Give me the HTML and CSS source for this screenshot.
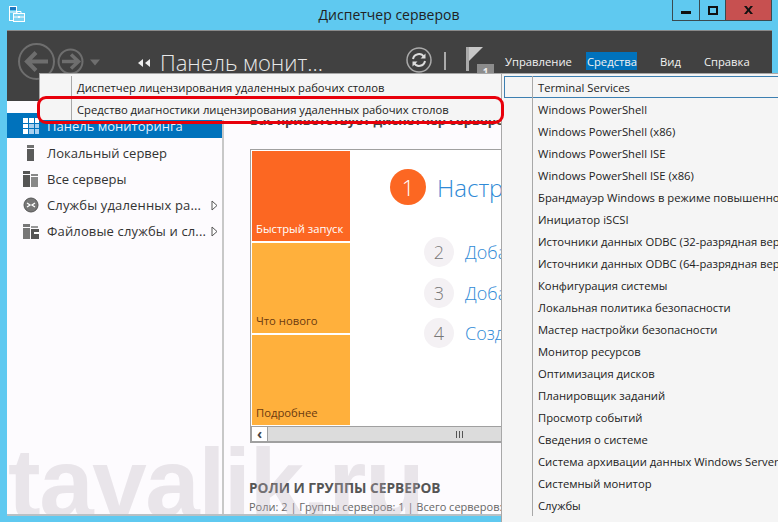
FILE: index.html
```html
<!DOCTYPE html>
<html lang="ru">
<head>
<meta charset="utf-8">
<title>Диспетчер серверов</title>
<link rel="stylesheet" href="styles.css">
</head>
<body>
<div class="window">
  <div class="titlebar">
    <svg class="app-icon" width="17" height="17" viewBox="0 0 17 17" fill="none"><rect x="0.500" y="0.500" width="7" height="14" stroke="#fff"/><rect x="1" y="1" width="6" height="3" fill="#1c78c0"/><path d="M1 6h6" stroke="#fff"/><rect x="4.500" y="7.500" width="11" height="8" fill="#7fd3f2" stroke="#fff"/><path d="M8 7.500V5.500h4v2M5 11h10" stroke="#fff"/><rect x="9" y="10" width="2" height="2" fill="#fff"/></svg>
    <div class="title">Диспетчер серверов</div>
    <div class="controls">
      <div class="ctl ctl-min"><span class="min-glyph"></span></div>
      <div class="ctl ctl-max"><span class="max-glyph"></span></div>
      <div class="ctl ctl-close"><svg width="9" height="8" viewBox="0 0 9 8"><path d="M0 0h2.500L4.500 2.500 6.500 0H9L5.800 4 9 8H6.500L4.500 5.500 2.500 8H0l3.200-4z" fill="#111"/></svg></div>
    </div>
  </div>
  <div class="client">
    <div class="toolbar">
      <svg class="nav" width="84" height="40" viewBox="0 0 84 40" fill="none" stroke="#6e6e6e">
        <circle cx="19.500" cy="19.500" r="17.500" stroke-width="2"/>
        <path d="M31 19.500H10M19 10.500l-9 9 9 9" stroke-width="4"/>
        <circle cx="53.500" cy="19.500" r="12" stroke-width="2"/>
        <path d="M45 19.500h17M54 12.500l7.500 7-7.500 7" stroke-width="3.500"/>
        <path d="M73 17.500h10l-5 6z" fill="#6e6e6e" stroke="none"/>
      </svg>
      <svg class="crumb-arrows" width="12" height="8" viewBox="0 0 12 8"><path d="M5 0v8L0 4zM12 0v8L7 4z" fill="#eee"/></svg>
      <span class="crumb">Панель монит...</span>
      <svg class="refresh" width="28" height="28" viewBox="0 0 28 28" fill="none"><circle cx="14" cy="14" r="12" stroke="#aaa" stroke-width="1.500"/><path d="M8 13a6 6 0 0 1 11-2M20 15a6 6 0 0 1-11 2" stroke="#ddd" stroke-width="2"/><path d="M20.500 7.500v5h-5zM7.500 20.500v-5h5z" fill="#ddd"/></svg>
      <span class="sep"></span>
      <div class="flag">
        <svg class="flag-svg" width="18" height="24" viewBox="0 0 18 24"><rect x="0" y="0" width="3" height="24" fill="#aaa"/><path d="M3 0h14L3 14z" fill="#c8c8c8"/></svg>
        <span class="badge">1</span>
      </div>
      <nav class="menubar">
        <span class="mi">Управление</span>
        <span class="mi mi-active">Средства</span>
        <span class="mi">Вид</span>
        <span class="mi">Справка</span>
      </nav>
    </div>
    <div class="strip"></div>
    <div class="content">
      <aside class="sidebar">
        <div class="side-item side-active">
          <svg class="si" width="16" height="16" viewBox="0 0 16 16"><path d="M0 0h5v5H0zM6 0h5v5H6zM12 0h4v5h-4z" fill="#fff"/><path d="M0 6h5v4H0zM0 11h5v5H0z" fill="#fff"/><path d="M6 6h5v4H6zM12 6h4v4h-4zM6 11h5v5H6zM12 11h4v5h-4z" fill="#a8cfee"/></svg>
          <span>Панель мониторинга</span>
        </div>
        <div class="side-item">
          <svg class="si" width="16" height="16" viewBox="0 0 16 16"><rect x="4" y="0" width="7" height="3" fill="#707070"/><rect x="4" y="4" width="7" height="12" fill="#5a5a5a"/></svg>
          <span>Локальный сервер</span>
        </div>
        <div class="side-item">
          <svg class="si" width="16" height="16" viewBox="0 0 16 16"><rect x="0" y="0" width="7" height="3" fill="#555"/><rect x="0" y="4" width="7" height="12" fill="#555"/><rect x="8" y="3" width="7" height="2" fill="#888"/><rect x="8" y="6" width="7" height="10" fill="#888"/></svg>
          <span>Все серверы</span>
        </div>
        <div class="side-item">
          <svg class="si" width="16" height="16" viewBox="0 0 16 16" fill="none"><circle cx="8" cy="8" r="7" fill="#777" stroke="#555"/><path d="M4 6l3 2-3 2M12 6L9 8l3 2" stroke="#fff" stroke-width="1.300"/></svg>
          <span class="side-label">Службы удаленных ра...</span>
          <svg class="tri" width="7" height="11" viewBox="0 0 7 11"><path d="M1 1v9l5-4.500z" fill="#fff" stroke="#555"/></svg>
        </div>
        <div class="side-item">
          <svg class="si" width="16" height="16" viewBox="0 0 16 16"><path d="M0 1h7v3H0zM0 5h7v11H0z" fill="#777"/><path d="M8 3h7v2H8z" fill="#999"/><path d="M8 6h8v10H8z" fill="#555"/><path d="M11 9h5v2h-5z" fill="#fff"/></svg>
          <span class="side-label">Файловые службы и сл...</span>
          <svg class="tri" width="7" height="11" viewBox="0 0 7 11"><path d="M1 1v9l5-4.500z" fill="#fff" stroke="#555"/></svg>
        </div>
      </aside>
      <main class="main">
        <div class="welcome">Вас приветствует диспетчер серверов</div>
        <div class="panel">
          <div class="panel-body">
            <div class="tiles">
              <div class="tile tile-orange">Быстрый запуск</div>
              <div class="tile">Что нового</div>
              <div class="tile">Подробнее</div>
            </div>
            <div class="steps">
              <div class="step-main"><span class="num-big">1</span><span class="step-big">Настроить этот локальный сервер</span></div>
              <div class="step"><span class="num">2</span><span class="step-text">Добавить роли и компоненты</span></div>
              <div class="step"><span class="num">3</span><span class="step-text">Добавить другие серверы</span></div>
              <div class="step"><span class="num">4</span><span class="step-text">Создать группу серверов</span></div>
            </div>
          </div>
          <div class="hscroll">
            <span class="sb-btn">‹</span>
            <div class="sb-track"><span class="sb-grip"></span></div>
          </div>
        </div>
        <h2 class="roles">РОЛИ И ГРУППЫ СЕРВЕРОВ</h2>
        <div class="roles-sub">Роли: 2 | Группы серверов: 1 | Всего серверов: 1</div>
      </main>
    </div>
    <div class="watermark">tavalik.ru</div>
  </div>
  <div class="menu menu-left">
    <div class="mrow">Диспетчер лицензирования удаленных рабочих столов</div>
    <div class="mrow">Средство диагностики лицензирования удаленных рабочих столов</div>
  </div>
  <div class="red-ring"></div>
  <div class="menu menu-right">
    <div class="mrow mrow-sel">Terminal Services</div>
    <div class="mrow">Windows PowerShell</div>
    <div class="mrow">Windows PowerShell (x86)</div>
    <div class="mrow">Windows PowerShell ISE</div>
    <div class="mrow">Windows PowerShell ISE (x86)</div>
    <div class="mrow">Брандмауэр Windows в режиме повышенной безопасности</div>
    <div class="mrow">Инициатор iSCSI</div>
    <div class="mrow">Источники данных ODBC (32-разрядная версия)</div>
    <div class="mrow">Источники данных ODBC (64-разрядная версия)</div>
    <div class="mrow">Конфигурация системы</div>
    <div class="mrow">Локальная политика безопасности</div>
    <div class="mrow">Мастер настройки безопасности</div>
    <div class="mrow">Монитор ресурсов</div>
    <div class="mrow">Оптимизация дисков</div>
    <div class="mrow">Планировщик заданий</div>
    <div class="mrow">Просмотр событий</div>
    <div class="mrow">Сведения о системе</div>
    <div class="mrow">Система архивации данных Windows Server</div>
    <div class="mrow">Системный монитор</div>
    <div class="mrow">Службы</div>
  </div>
</div>
</body>
</html>
```
FILE: styles.css
```css
* { box-sizing: border-box; }
html, body { margin: 0; height: 100%; overflow: hidden; }
body { background: #5fc9f0; font-family: "Open Sans", "Noto Sans", sans-serif; color: #333; }
.window { position: relative; width: 778px; height: 522px; overflow: hidden; background: #5fc9f0; display: flex; flex-direction: column; }
.titlebar { height: 30px; flex: none; display: flex; position: relative; justify-content: center; }
.app-icon { position: absolute; left: 9px; top: 6px; }
.title { font-size: 14px; line-height: 30px; color: #222; }
.controls { position: absolute; right: 6px; top: 0; display: flex; height: 21px; border: 1px solid #3a4a50; border-top: 0; }
.ctl { display: flex; align-items: center; justify-content: center; }
.ctl-min { width: 27px; border-right: 1px solid #3a4a50; }
.ctl-max { width: 26px; border-right: 1px solid #3a4a50; }
.ctl-close { width: 45px; background: #c75050; }
.min-glyph { width: 10px; height: 3px; background: #111; margin-top: 4px; }
.max-glyph { width: 10px; height: 9px; border: 2px solid #111; }
.client { position: relative; margin: 0 6px 0 7px; height: 486px; flex: none; background: #fdfbfe; display: flex; flex-direction: column; overflow: hidden; border-bottom: 2px solid #b9c0c4; }
.toolbar { height: 71px; flex: none; background: #414141; display: flex; align-items: flex-start; position: relative; border-top: 1px solid #8a8a8a; color: #fff; padding: 14px 0 0 10px; }
.nav { margin-top: -3px; flex: none; }
.crumb-arrows { flex: none; margin: 14px 0 0 37px; }
.crumb { font-weight: 300; font-size: 22px; line-height: 30px; color: #e8e8e8; width: 245px; margin: 2px 0 0 10px; white-space: nowrap; }
.refresh { margin-top: 1px; flex: none; }
.sep { width: 2px; height: 18px; background: #aaa; margin: 7px 0 0 11px; flex: none; }
.flag { position: relative; margin: 2px 0 0 20px; width: 30px; }
.flag-svg { display: block; }
.badge { position: absolute; left: 11px; top: 17px; width: 17px; height: 14px; background: #8c8c8c; font-size: 10px; font-weight: 700; text-align: center; line-height: 16px; color: #eee; }
.menubar { display: flex; position: absolute; left: 498px; top: 21px; }
.mi { font-size: 11.250px; line-height: 20px; height: 18px; color: #f2f2f2; white-space: nowrap; margin-right: 23px; }
.mi:nth-child(1) { margin-right: 14px; }
.mi-active { background: #0072bc; padding: 0 0 0 1px; }
.strip { height: 12px; flex: none; background: #fdfbfe; }
.content { flex: 1; display: flex; min-height: 0; }
.sidebar { width: 217px; flex: none; border-right: 2px solid #c8c8c8; height: 100%; }
.side-item { height: 26px; display: flex; align-items: center; padding-left: 16px; font-size: 13px; color: #333; position: relative; white-space: nowrap; }
.side-active { background: #0072bc; color: #dfefff; height: 25px; padding-top: 1px; margin-bottom: 2px; }
.si { flex: none; margin-right: 8px; }
.side-label { flex: 1; letter-spacing: 0.150px; }
.tri { position: absolute; left: 204px; top: 8px; }
.main { flex: 1; position: relative; padding: 0 0 0 26px; min-width: 0; overflow: hidden; }
.welcome { font-size: 13px; font-weight: 700; color: #444; line-height: 16px; margin: -1px 0 0 0; height: 37px; white-space: nowrap; }
.panel { width: 300px; height: 294px; border: 1px solid #a0a0a0; border-bottom-width: 2px; overflow: hidden; background: #fff; }
.panel-body { height: 276px; display: flex; padding: 1px; }
.tiles { width: 98px; flex: none; display: flex; flex-direction: column; gap: 2px; }
.tile { height: 90px; background: #ffb03c; color: #6b3a10; font-size: 11.250px; display: flex; align-items: flex-end; padding: 0 0 4px 4px; white-space: nowrap; line-height: 16px; }
.tile-orange { background: #fc6722; color: #fff; }
.steps { flex: 1; min-width: 0; padding: 18px 0 0 40px; overflow: hidden; }
.step-main { display: flex; align-items: center; height: 36px; white-space: nowrap; }
.num-big { flex: none; width: 36px; height: 36px; border-radius: 50%; background: #fc6722; color: #fff; font-size: 22px; font-weight: 300; text-align: center; line-height: 36px; margin-right: 11px; }
.step-big { font-size: 24px; font-weight: 300; color: #2f8ad6; }
.step { display: flex; align-items: center; height: 30px; margin: 10.500px 0 0 34px; white-space: nowrap; }
.step-main + .step { margin-top: 32px; }
.num { flex: none; width: 30px; height: 30px; border-radius: 50%; background: #f4f1f4; color: #777; font-size: 18px; font-weight: 300; text-align: center; line-height: 30px; margin-right: 11px; }
.step-text { font-size: 18px; font-weight: 300; color: #2f8ad6; }
.hscroll { height: 15px; display: flex; border-top: 1px solid #a0a0a0; background: #dcdcdc; }
.sb-btn { width: 17px; background: #fff; border-right: 1px solid #a0a0a0; border-left: 1px solid #a0a0a0; font-size: 14px; line-height: 13px; text-align: center; color: #444; font-weight: 700; }
.sb-track { flex: 1; position: relative; }
.sb-grip { position: absolute; left: 188px; top: 4px; width: 8px; height: 7px; background: repeating-linear-gradient(90deg, #555 0 1px, transparent 1px 3px); }
.roles { font-size: 13.700px; font-weight: 700; color: #555; margin: 36px 0 0 -1px; line-height: 18px; white-space: nowrap; }
.roles-sub { font-size: 11px; color: #666; margin: 2px 0 0 -1px; line-height: 16px; white-space: nowrap; }
.watermark { position: absolute; left: 1px; top: 396px; font-family: "Liberation Sans", sans-serif; font-weight: 700; font-size: 98px; letter-spacing: -1.500px; line-height: 115px; color: rgba(190, 180, 190, 0.3); white-space: nowrap; pointer-events: none; }
.menu { position: absolute; background: #f5f5f5; border: 1px solid #a8a8a8; padding: 2px; font-size: 11.250px; color: #222; }
.mrow { height: 22px; line-height: 24px; padding-left: 34px; white-space: nowrap; position: relative; }
.mrow::before { content: ""; position: absolute; left: 29px; top: 0; bottom: 0; width: 1px; background: #a8a8a8; }
.menu-left { left: 39px; top: 73px; width: 463px; height: 47px; z-index: 2; border-bottom: 0; padding-bottom: 0; }
.menu-left .mrow { padding-left: 35px; }
.menu-right { left: 501px; top: 73px; width: 300px; height: 460px; z-index: 2; }
.menu-right .mrow::before { left: 28px; }
.mrow-sel { outline: 1px solid #3c7fb1; outline-offset: -1px; }
.red-ring { position: absolute; left: 37px; top: 96px; width: 467px; height: 28px; border: 3px solid #e8000b; border-radius: 9px; z-index: 3; }
```
